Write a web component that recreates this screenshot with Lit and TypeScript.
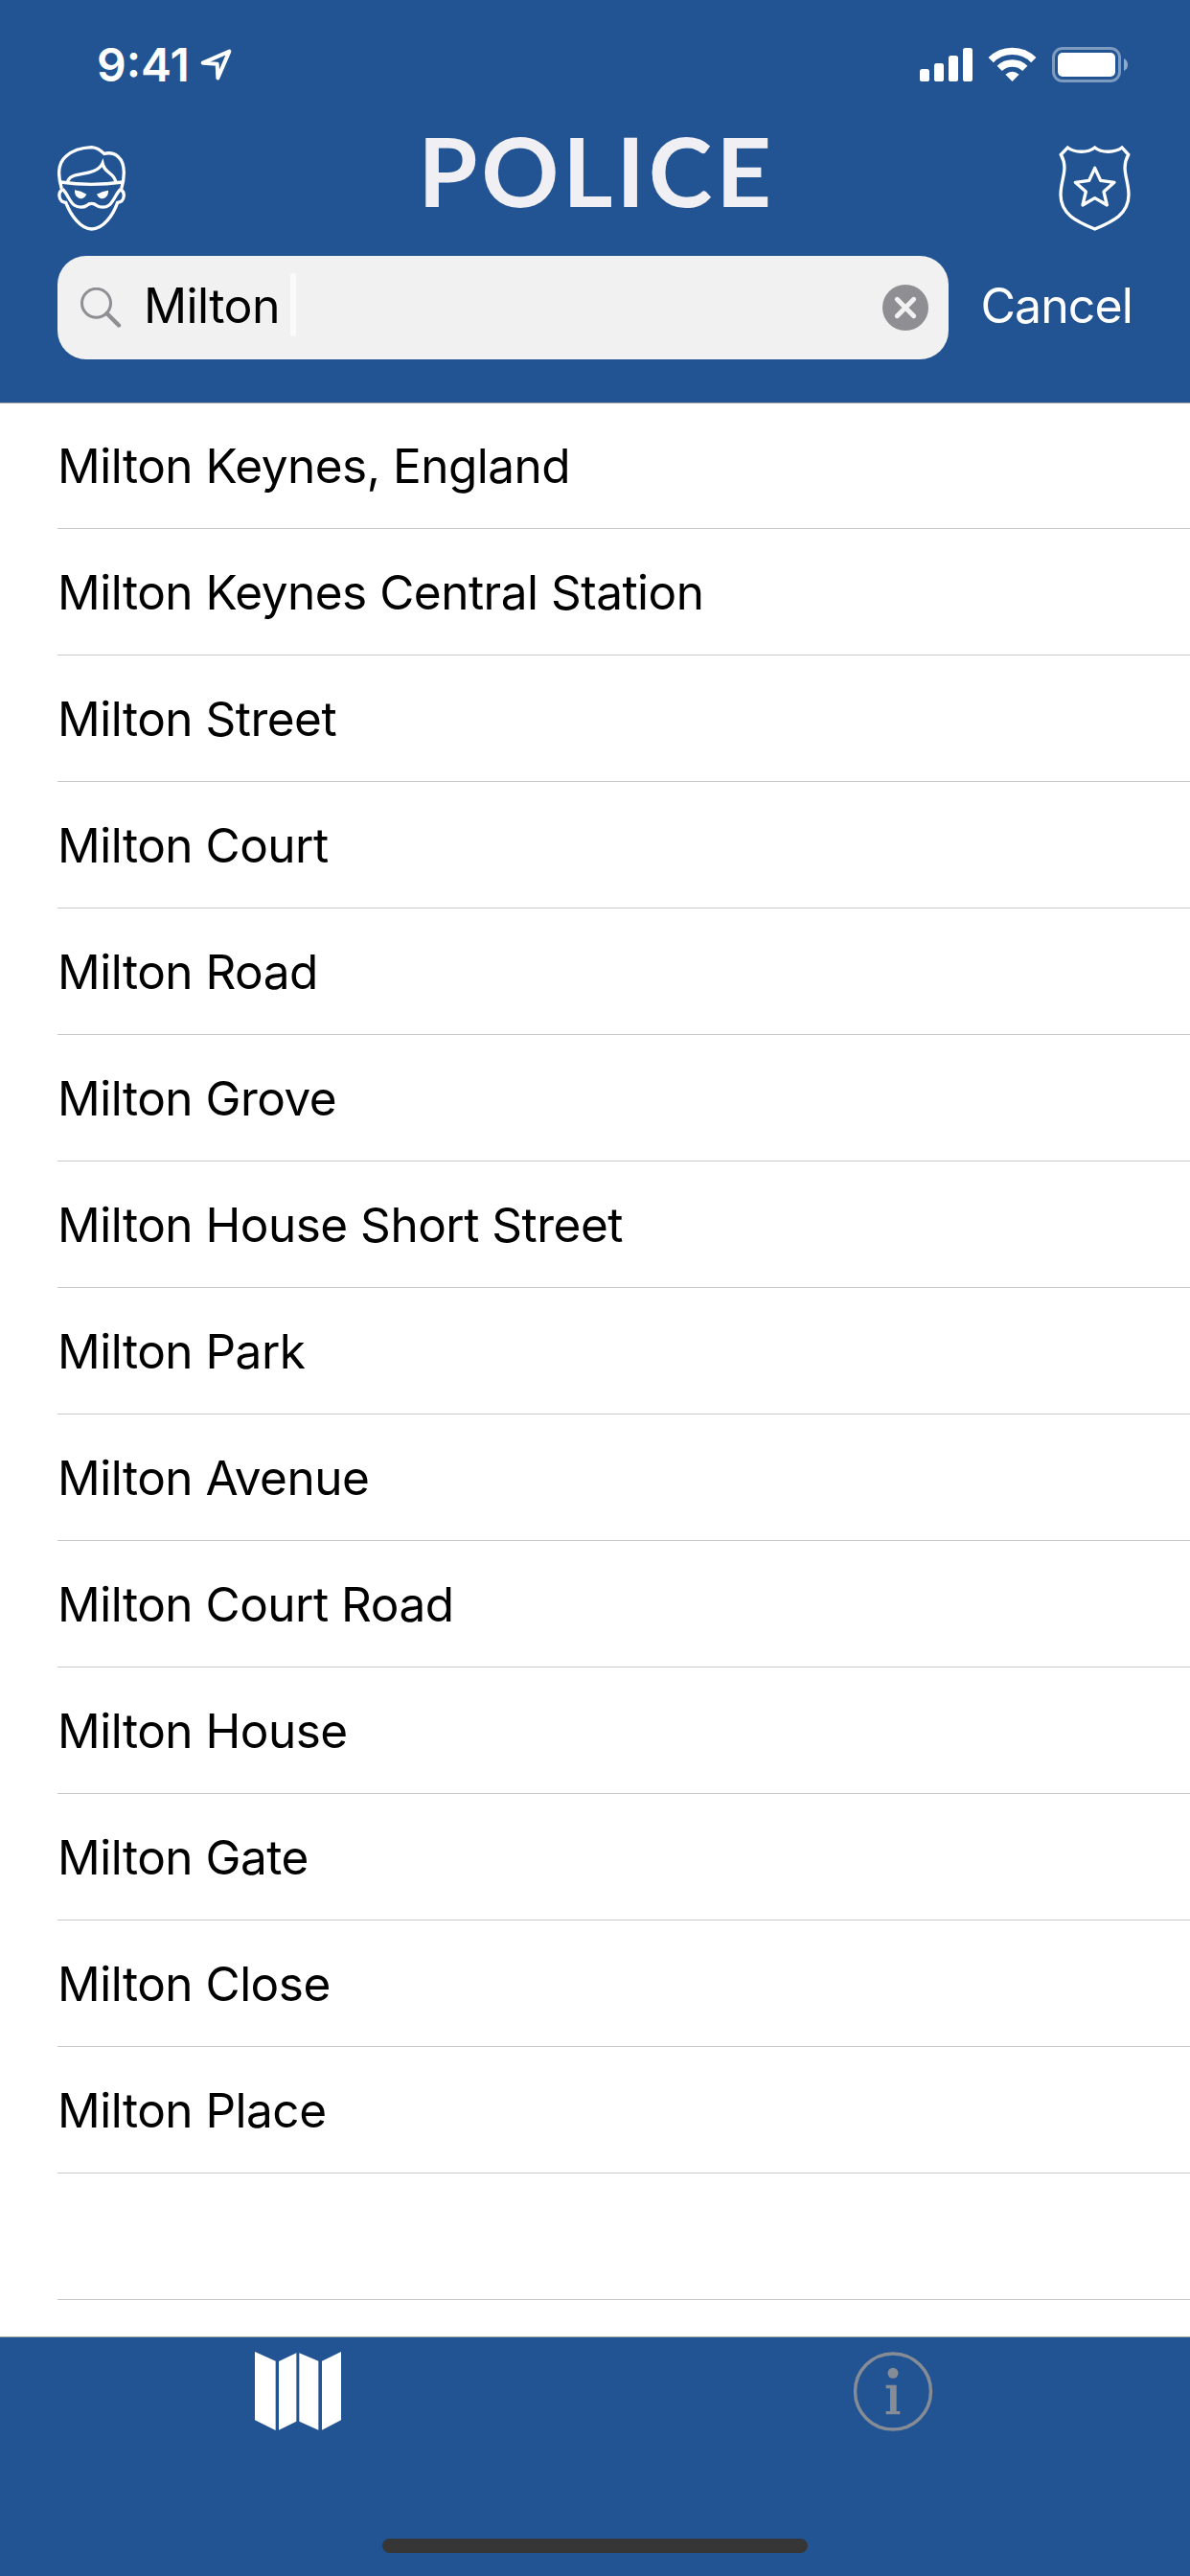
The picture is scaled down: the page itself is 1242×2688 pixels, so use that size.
import { LitElement, html, css } from "lit";
import { customElement, property } from "lit/decorators.js";

const PLACES = [
  "Milton Keynes, England",
  "Milton Keynes Central Station",
  "Milton Street",
  "Milton Court",
  "Milton Road",
  "Milton Grove",
  "Milton House Short Street",
  "Milton Park",
  "Milton Avenue",
  "Milton Court Road",
  "Milton House",
  "Milton Gate",
  "Milton Close",
  "Milton Place",
  "",
];

@customElement("status-bar")
class StatusBar extends LitElement {
  static styles = css`
    :host {
      display: flex;
      justify-content: space-between;
      height: 102px;
      padding: 36px 65px 0 101px;
      box-sizing: border-box;
      color: #fff;
    }
    .left {
      display: flex;
      align-items: flex-start;
    }
    .time {
      width: 108px;
      font: 600 48px/64px Inter, sans-serif;
      letter-spacing: 0;
    }
    .arrow {
      display: block;
      margin-top: 15px;
    }
    .right {
      display: block;
      margin-top: 11px;
    }
  `;
  render() {
    return html`
      <div class="left">
        <span class="time">9:41</span>
        <svg class="arrow" width="33" height="34" viewBox="507 93 99 102" fill="none" stroke="#fff" stroke-width="12" stroke-linejoin="round">
          <path d="M515 137 L598 101 L562 184 L560 140 Z" />
        </svg>
      </div>
      <svg class="right" width="217" height="41" viewBox="960 47 217 41">
        <g fill="#fff">
          <rect x="960" y="72" width="10" height="13" rx="2.6" />
          <rect x="975" y="66" width="10" height="19" rx="2.6" />
          <rect x="990" y="58" width="10" height="27" rx="2.6" />
          <rect x="1005" y="50" width="10" height="35" rx="2.6" />
          <path d="M1056.5 85 L1049.4 77.8 Q1056.5 71.6 1063.6 77.8 Z" />
        </g>
        <g fill="none" stroke="#fff" stroke-width="7.4">
          <path d="M1034.2 62.6 A31.5 31.5 0 0 1 1078.8 62.6" />
          <path d="M1043.2 71.4 A19 19 0 0 1 1069.8 71.4" />
        </g>
        <rect x="1099.5" y="50.5" width="69" height="34" rx="9.5" fill="none" stroke="#fff" stroke-width="3" opacity=".42" />
        <rect x="1104" y="55" width="60" height="25" rx="5" fill="#fff" />
        <path d="M1173 61 Q1177 63 1177 67.5 Q1177 72 1173 74 Z" fill="#fff" opacity=".5" />
      </svg>
    `;
  }
}

@customElement("title-bar")
class TitleBar extends LitElement {
  static styles = css`
    :host {
      display: flex;
      justify-content: space-between;
      height: 165px;
      padding: 0 62px 0 60px;
      box-sizing: border-box;
    }
    .icon {
      display: block;
      margin-top: 50px;
    }
    .title {
      margin: 0;
      padding: 15px 0 0 9px;
      color: #f0eff4;
      font: 700 100.5px/120px Lato, sans-serif;
      letter-spacing: 3.8px;
    }
  `;
  render() {
    return html`
      <svg class="icon" width="71" height="89" viewBox="60 396 213 267" fill="none" stroke="#fff" stroke-width="10">
        <path d="M73 531 C61 490 61 450 87 429 C110 408 145 402 167 401 C182 402 196 411 206 421 C240 413 268 434 268 480 C268 500 265 515 260 531" />
        <path d="M92 509 C98 474 180 496 201 451 C207 483 238 480 242 509" />
        <path d="M70 510 Q165 524 264 510" />
        <path d="M77 533 C60 540 62 572 86 574 C102 614 132 657 167 657 C203 657 234 614 248 574 C272 572 273 540 257 533" />
        <path d="M76 532 C90 545 99 573 112 582 C125 591 143 590 152 583 C160 575 174 575 182 583 C192 590 210 591 222 582 C235 572 244 545 258 532" />
        <path d="M201 440 L195 460 L208 460 Z" fill="#fff" stroke="none" />
        <path d="M114 535 Q134 538 151 548 C145 560 137 562 132 562 C122 560 113 552 114 535 Z M219 536 Q202 538 183 548 C189 560 196 562 201 562 C211 560 220 552 219 536 Z" fill="#fff" stroke="none" />
      </svg>
      <h1 class="title">POLICE</h1>
      <svg class="icon" width="75" height="89" viewBox="495 396 225 267" fill="none" stroke="#fff" stroke-width="10">
        <path d="M523 402 C545 418 585 420 608 402 C630 420 672 418 693 402 L713 424 C688 470 714 500 714 550 C714 610 665 633 608 657 C550 633 501 610 501 550 C501 500 527 470 502 424 Z" />
        <path d="M608 466 L626 505 L669 511 L636 540 L646 582 L608 560 L570 582 L580 540 L547 511 L590 505 Z" stroke-linejoin="round" />
      </svg>
    `;
  }
}

@customElement("search-row")
class SearchRow extends LitElement {
  @property() query = "";

  static styles = css`
    :host {
      display: flex;
      align-items: center;
      justify-content: space-between;
      height: 108px;
      margin: 0 60px;
      font: 400 50px/60px Inter, sans-serif;
    }
    .field {
      display: flex;
      align-items: center;
      width: 930px;
      height: 108px;
      padding: 0 21px 0 24px;
      box-sizing: border-box;
      border-radius: 30px;
      background: #f1f1f1;
    }
    .lens {
      display: block;
      width: 43px;
      margin-right: 23px;
    }
    .query {
      padding-bottom: 4px;
      color: #000;
      letter-spacing: -0.6px;
    }
    .caret {
      width: 6px;
      height: 66px;
      margin: 0 0 6px 11px;
      border-radius: 3px;
      background: #fbfbfb;
    }
    .clear {
      display: block;
      margin-left: auto;
    }
    .cancel {
      padding-bottom: 4px;
      color: #fff;
      letter-spacing: -0.9px;
    }
  `;
  render() {
    return html`
      <div class="field">
        <svg class="lens" width="43" height="43" viewBox="84 299 43 43" fill="none" stroke="#8e8e93">
          <circle cx="100.5" cy="315.3" r="15" stroke-width="3" />
          <path d="M111.5 326 L124 338.5" stroke-width="4.4" stroke-linecap="round" />
        </svg>
        <span class="query">${this.query}</span>
        <span class="caret"></span>
        <svg class="clear" width="48" height="48" viewBox="0 0 48 48">
          <circle cx="24" cy="24" r="24" fill="#8e8e93" />
          <path d="M15.3 15.3 L32.7 32.7 M32.7 15.3 L15.3 32.7" stroke="#f1f1f1" stroke-width="5" stroke-linecap="round" />
        </svg>
      </div>
      <span class="cancel">Cancel</span>
    `;
  }
}

@customElement("tab-bar")
class TabBar extends LitElement {
  static styles = css`
    :host {
      position: relative;
      display: grid;
      grid-template-columns: 1fr 1fr;
      justify-items: center;
      align-items: start;
      height: 250px;
      padding-top: 15px;
      box-sizing: border-box;
      border-top: 1px solid #a7a7aa;
      background: #225493;
    }
    .tab {
      display: block;
    }
    .home {
      position: absolute;
      left: 399px;
      bottom: 24px;
      width: 444px;
      height: 15px;
      border-radius: 8px;
      background: #363636;
    }
  `;
  render() {
    return html`
      <svg class="tab" width="90" height="82" viewBox="75 222 270 246" fill="#fff">
        <path d="M75 222 L140 251 V468 L75 436 Z M150 252 L205 226 V440 L150 467 Z M214 226 L274 251 V467 L214 440 Z M285 251 L345 222 V436 L285 467 Z" />
      </svg>
      <svg class="tab" width="84" height="83" viewBox="86 222 252 249" fill="#868c95">
        <circle cx="212" cy="346.5" r="118.5" fill="none" stroke="#868c95" stroke-width="10.5" />
        <circle cx="212" cy="289" r="16.5" />
        <path d="M190 326 H223 V408 H234 V418 H190 V408 H203 V337 H190 Z" />
      </svg>
      <div class="home"></div>
    `;
  }
}

@customElement("app-root")
class AppRoot extends LitElement {
  static styles = css`
    :host {
      display: flex;
      flex-direction: column;
      width: 1242px;
      height: 2688px;
      overflow: hidden;
      background: #fff;
    }
    .header {
      flex: none;
      height: 421px;
      box-sizing: border-box;
      border-bottom: 1px solid #a7a7aa;
      background: #225493;
    }
    .list {
      flex: 1;
      min-height: 0;
      margin: 0;
      padding: 0 0 0 60px;
      list-style: none;
      overflow: hidden;
    }
    .row {
      height: 132px;
      padding-top: 36px;
      box-sizing: border-box;
      border-bottom: 1px solid #c8c7cc;
      color: #000;
      font: 400 49.5px/60px Inter, sans-serif;
      letter-spacing: -0.5px;
      white-space: nowrap;
    }
    .row:first-child {
      height: 131px;
      padding-top: 35px;
    }
    .tabs {
      flex: none;
    }
  `;
  render() {
    return html`
      <header class="header">
        <status-bar></status-bar>
        <title-bar></title-bar>
        <search-row query="Milton"></search-row>
      </header>
      <ul class="list">
        ${PLACES.map((name) => html`<li class="row">${name}</li>`)}
      </ul>
      <tab-bar class="tabs"></tab-bar>
    `;
  }
}
